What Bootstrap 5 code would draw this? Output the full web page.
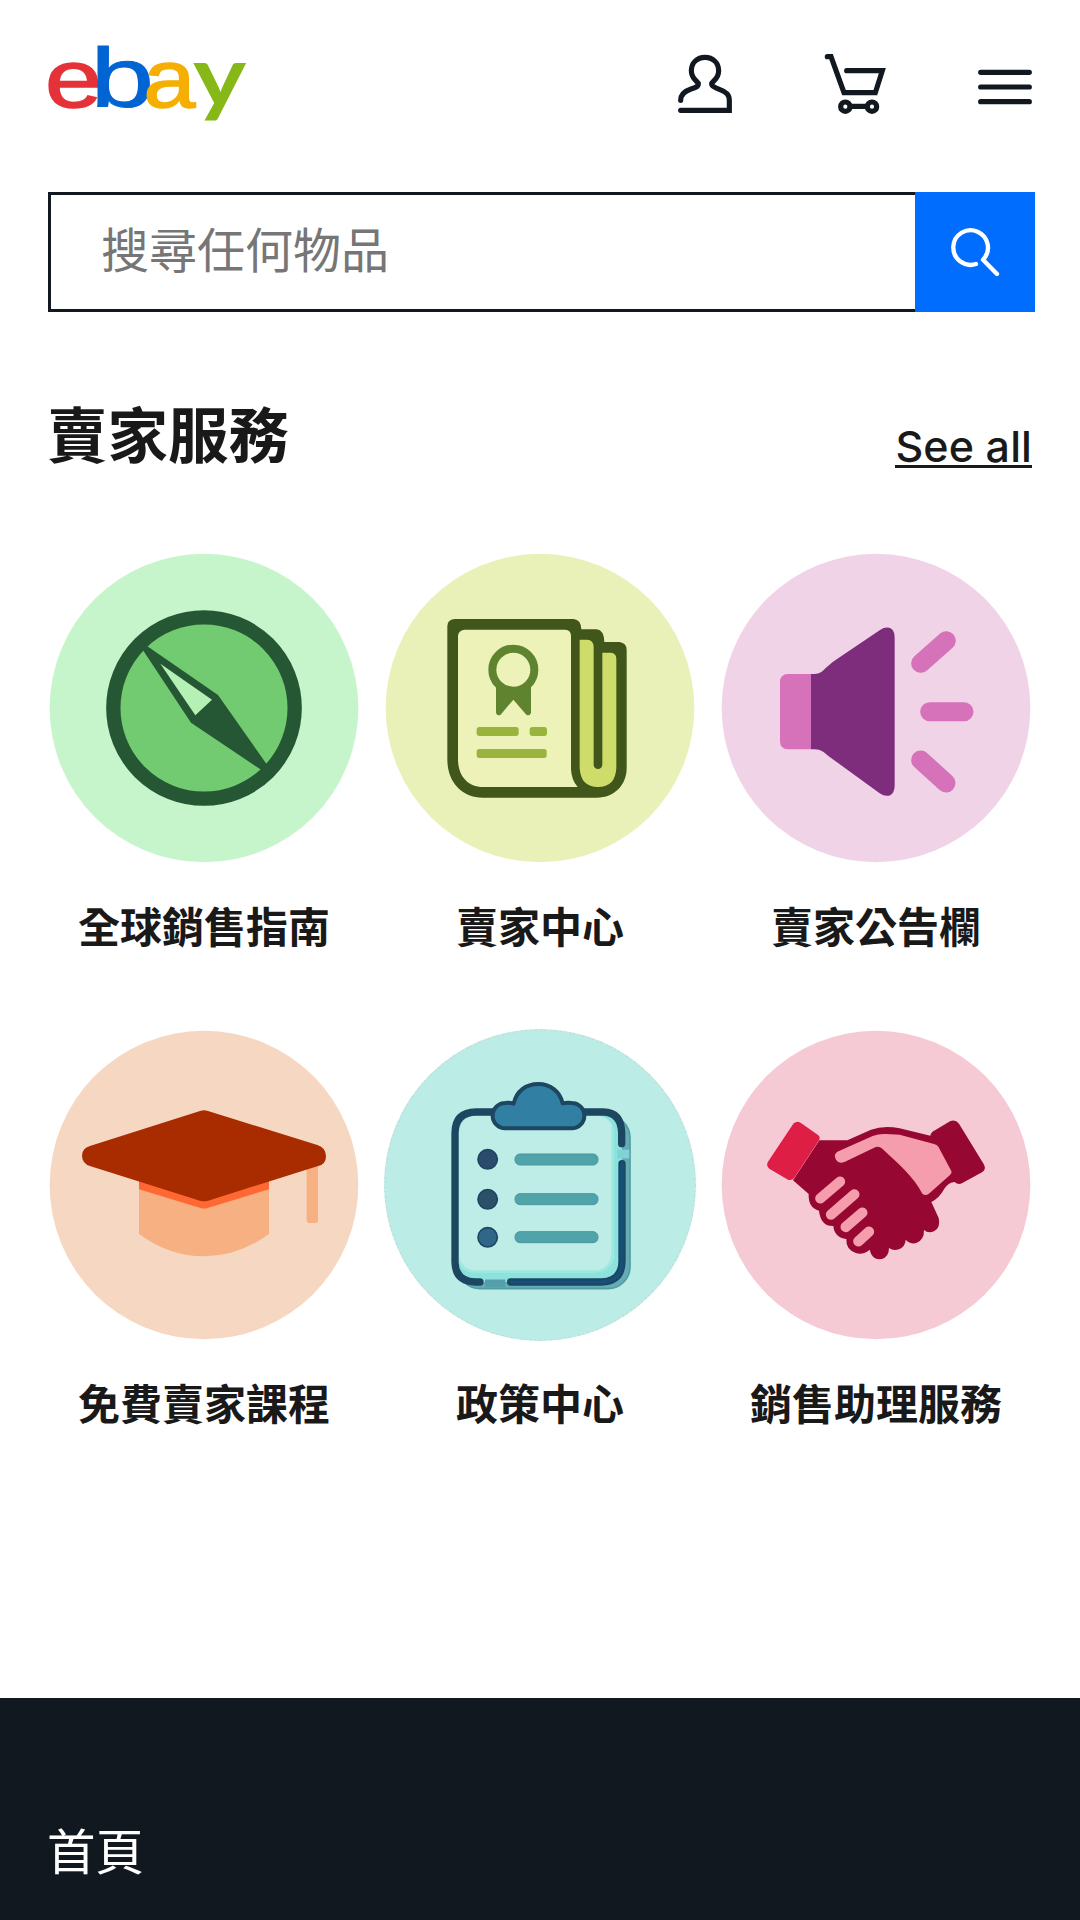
<!DOCTYPE html>
<html lang="zh-Hant">
<head>
<meta charset="utf-8">
<meta name="viewport" content="width=device-width, initial-scale=1">
<title>eBay 賣家服務</title>
<link href="https://cdn.jsdelivr.net/npm/bootstrap@5.3.0/dist/css/bootstrap.min.css" rel="stylesheet">
<style>
  body { font-family: "Noto Sans CJK TC", sans-serif; color: #191919; background: #fff; }
  svg { display: block; flex: none; }
  .top-bar { height: 192px; padding: 44px 47px 0 48px; }
  .logo-text { font-family: "Liberation Sans", sans-serif; font-size: 84px; }
  .logo-y { font-family: Lato, sans-serif; font-weight: 700; }
  .top-icons { gap: 88px; margin-top: 8px; }
  .stroke-icon { fill: none; stroke: #111820; stroke-width: 15.5; stroke-linecap: round; }
  .search-bar { width: 987px; height: 120px; margin-left: 48px; }
  .search-bar .form-control { height: 120px; border: 3px solid #111820; border-right: 0; border-radius: 0; padding: 0 0 10px 50px; font-size: 48px; color: #111820; box-shadow: none; }
  .search-bar .form-control::placeholder { color: #767676; opacity: 1; }
  .search-btn { width: 120px; height: 120px; background: #006dff; border: 0; border-radius: 0; }
  .section-head { height: 236px; padding: 76px 48px 0 47px; }
  .section-title { font-size: 60.5px; font-weight: 700; line-height: 88px; }
  .see-all { font-family: Inter, sans-serif; font-size: 43px; font-weight: 500; line-height: 50px; color: #191919; letter-spacing: .1px; margin-top: 33px; height: 47px; border-bottom: 3px solid #191919; }
  .services { padding: 0 36px; height: 1150px; }
  .service { height: 477px; color: #191919; }
  .service-name { font-size: 42px; font-weight: 700; line-height: 60px; margin-top: 27px; }
  .site-footer { height: 222px; background: #111820; padding: 116px 47px 0; }
  .site-footer a { font-size: 48.5px; line-height: 70px; color: #fff; }
</style>
<script defer src="https://cdn.jsdelivr.net/npm/bootstrap@5.3.0/dist/js/bootstrap.bundle.min.js"></script>
</head>
<body class="overflow-hidden">
<header class="top-bar d-flex justify-content-between align-items-start">
  <a href="#" class="text-decoration-none" aria-label="eBay">
    <svg class="logo-text" width="200" height="84" viewBox="48 44 200 84" overflow="visible">
      <text transform="translate(45 106.6) scale(1.22 .98)" fill="#e53238" stroke="#e53238" stroke-width="1.6">e</text>
      <text transform="translate(90.4 106.6) scale(1.36 .99)" fill="#0064d2" stroke="#0064d2">b</text>
      <text transform="translate(143.5 106.6) scale(1.11 .98)" fill="#f5af02" stroke="#f5af02" stroke-width="1.6">a</text>
      <text class="logo-y" transform="translate(193 106) scale(1.2 1)" fill="#86b817">y</text>
    </svg>
  </a>
  <nav class="top-icons d-flex" aria-label="主選單">
    <a href="#" aria-label="帳戶"><svg class="stroke-icon" width="60" height="64" viewBox="45 36 180 192">
      <path d="M62 181C62 160 78 152 93 147C106 143 115 140 115 131C115 124 94 119 94 92C94 68 112 52 135 52S176 68 176 92C176 119 155 124 155 131C155 139 168 144 180 149C199 156 208 163 208 182V211H62"/></svg></a>
    <a href="#" aria-label="購物車"><svg class="stroke-icon" width="65" height="64" viewBox="489 36 195 192">
      <path d="M502 50H513L552 158H646L667 92H560M572 199H620"/><circle cx="556" cy="200" r="14"/><circle cx="636" cy="200" r="14"/></svg></a>
    <a href="#" aria-label="選單"><svg class="stroke-icon" width="57" height="64" viewBox="948 36 171 192">
      <path d="M962 97H1108M962 141H1108M962 185H1108"/></svg></a>
  </nav>
</header>
<main>
  <form class="search-bar d-flex">
    <input class="form-control flex-grow-1" type="text" placeholder="搜尋任何物品" aria-label="搜尋任何物品">
    <button class="search-btn btn p-0 d-flex align-items-center justify-content-center" type="button" aria-label="搜尋">
      <svg width="120" height="120" viewBox="165 36 360 360" fill="none" stroke="#fff" stroke-width="13" stroke-linecap="round" stroke-linejoin="round"><path d="M348 252A52 52 0 1 1 369 239L411 282"/></svg>
    </button>
  </form>
  <div class="section-head d-flex justify-content-between align-items-start">
    <h2 class="section-title mb-0">賣家服務</h2>
    <a class="see-all text-decoration-none" href="#">See all</a>
  </div>
  <div class="services">
    <div class="row g-0 text-center">
      <a href="#" class="service col-4 d-flex flex-column align-items-center text-decoration-none">
        <svg width="320" height="320" viewBox="12 24 960 960">
          <circle cx="492" cy="504" r="463" fill="#c6f5cb"/>
          <circle cx="492" cy="504" r="272" fill="#73cb71" stroke="#265734" stroke-width="43"/>
          <path d="M311 334L293 299L321 318L534 465L681 674L690 706L661 688L453 548Z" fill="#265734"/>
          <path d="M361 371L516 479L466 526Z" fill="#b5f0b4"/>
        </svg>
        <span class="service-name">全球銷售指南</span>
      </a>
      <a href="#" class="service col-4 d-flex flex-column align-items-center text-decoration-none">
        <svg width="320" height="320" viewBox="12 24 960 960">
          <circle cx="492" cy="504" r="463" fill="#eaf1b8"/>
          <path d="M235 237H593Q615 239 616 268H662Q684 270 685 306H731Q752 309 752 330V684C752 735 715 773 663 773H321C255 773 214 724 214 658V258Q214 240 235 237Z" fill="#40561b"/>
          <path d="M265 269H568Q585 270 585 288V687Q586 719 605 741H321C275 741 246 707 246 658V288Q247 271 265 269Z" fill="#ecf2b8"/>
          <path d="M611 299H633Q653 300 653 321V674A13 13 0 0 0 679 674V338H704Q721 339 721 356V684Q718 741 666 741T611 684Z" fill="#cedc6a"/>
          <path d="M360 435H465V518Q461 530 451 524L412 479L374 524Q363 529 360 518Z" fill="#5f832f"/>
          <circle cx="412" cy="389" r="63" fill="#ecf2b8" stroke="#5f832f" stroke-width="24"/>
          <g fill="#98b43d"><rect x="302" y="561" width="126" height="27" rx="8"/><rect x="461" y="561" width="52" height="27" rx="8"/><rect x="302" y="627" width="210" height="27" rx="8"/></g>
        </svg>
        <span class="service-name">賣家中心</span>
      </a>
      <a href="#" class="service col-4 d-flex flex-column align-items-center text-decoration-none">
        <svg width="320" height="320" viewBox="12 24 960 960">
          <circle cx="492" cy="504" r="463" fill="#f1d3e8"/>
          <path d="M298 402H228Q204 403 204 426V603Q204 627 228 628H298Z" fill="#d672b9"/>
          <path d="M297 402C326 402 328 397 341 384Q361 365 384 351L504 270Q524 257 539 267Q548 275 548 294V738Q547 758 536 765Q521 772 503 760L348 647C328 631 327 628 297 628Z" fill="#7d2d7c"/>
          <path d="M626 370L703 302M653 515H756M626 660L702 729" fill="none" stroke="#d672b9" stroke-width="57" stroke-linecap="round"/>
        </svg>
        <span class="service-name">賣家公告欄</span>
      </a>
      <a href="#" class="service col-4 d-flex flex-column align-items-center text-decoration-none">
        <svg width="320" height="320" viewBox="12 14 960 960">
          <circle cx="492" cy="494" r="463" fill="#f6d7c1"/>
          <path d="M297 480H687V641Q595 708 492 708T297 641Z" fill="#f6b081"/>
          <path d="M297 470H687V507L505 562Q492 567 479 562L297 507Z" fill="#ff6833"/>
          <path d="M800 430H834V600Q834 608 826 608H808Q800 608 800 600Z" fill="#f6b081"/>
          <path d="M480 272Q492 268 504 272L832 374Q858 382 858 408T832 438L504 541Q492 545 480 541L152 438Q126 430 126 406T152 376Z" fill="#a92b00"/>
        </svg>
        <span class="service-name">免費賣家課程</span>
      </a>
      <a href="#" class="service col-4 d-flex flex-column align-items-center text-decoration-none">
        <svg width="320" height="320" viewBox="12 14 960 960">
          <circle cx="492" cy="494" r="468" fill="#bcece6"/>
          <circle cx="492" cy="494" r="465" fill="none" stroke="#cbd6d2" stroke-width="4" stroke-dasharray="5 13 3 8"/>
          <rect x="246" y="286" width="516" height="519" rx="66" fill="#62adb6" stroke="#559da5" stroke-width="5"/>
          <rect x="237" y="275" width="501" height="510" rx="60" fill="#8ce3de"/>
          <rect x="249" y="286" width="464" height="469" rx="50" fill="#beece6"/>
          <path d="M248 720Q262 754 300 754H655Q708 752 710 695V320" fill="none" stroke="#9de8df" stroke-width="8"/>
          <path d="M742 388V414" stroke="#80d3d5" stroke-width="36"/>
          <path d="M350 275H300Q237 276 237 339V725Q238 783 298 785H312M404 785H676Q737 783 738 724V430M737 370V337Q735 276 682 275H625" fill="none" stroke="#1d4661" stroke-width="22" stroke-linecap="round"/>
          <path d="M327 789H388" stroke="#559faa" stroke-width="23"/>
          <path d="M405 785H676Q737 783 738 724V430" fill="none" stroke="#164f78" stroke-width="10" stroke-linecap="round"/>
          <path d="M388 324A36 36 0 0 1 388 248Q400 246 413 250C421 212 450 191 487 191S552 215 560 249Q573 246 587 248A37 37 0 0 1 587 324Z" fill="#3180a4" stroke="#1d4661" stroke-width="12" stroke-linejoin="round"/>
          <g stroke="#1d4661" stroke-width="5"><circle cx="335" cy="417" r="29" fill="#2b4b6d"/><circle cx="335" cy="537" r="29" fill="#2c5069"/><circle cx="335" cy="651" r="29" fill="#306688"/></g>
          <g fill="#51a3aa" stroke="#4698a0" stroke-width="3"><rect x="417" y="401" width="249" height="33" rx="15"/><rect x="417" y="520" width="249" height="33" rx="15"/><rect x="417" y="634" width="249" height="33" rx="15"/></g>
        </svg>
        <span class="service-name">政策中心</span>
      </a>
      <a href="#" class="service col-4 d-flex flex-column align-items-center text-decoration-none">
        <svg width="320" height="320" viewBox="12 14 960 960">
          <circle cx="492" cy="494" r="463" fill="#f5cad5"/>
          <path d="M322 360H406L477 328Q516 314 563 324L655 346Q657 336 669 330L714 303Q730 296 741 310L815 431Q824 447 810 456L751 488Q739 495 728 485Q710 486 698 504Q681 535 658 545L680 593Q687 622 666 633Q648 640 636 629Q637 659 613 668Q596 673 581 658Q580 678 561 687Q544 693 531 683Q531 710 509 716Q480 720 473 688Q455 704 433 699Q401 688 403 656Q367 652 364 617Q326 618 321 571Q288 562 290 521L243 480Z" fill="#960832"/>
          <path d="M245 309Q257 300 268 309L318 344Q326 350 321 360L247 472Q240 481 228 478L172 445Q162 438 167 426Z" fill="#df1e45"/>
          <path d="M376 394L482 347Q500 340 522 341L563 343L666 371Q675 373 679 379L718 452Q721 459 714 464L654 517Q642 530 631 520C606 469 555 426 511 385Q499 374 485 383L399 424Q381 433 372 418Q363 403 376 394Z" fill="#f69dad"/>
          <path d="M325 534L384 484M357 583L427 522M401 620L451 577M439 663L471 634" fill="none" stroke="#f69dad" stroke-width="31" stroke-linecap="round"/>
        </svg>
        <span class="service-name">銷售助理服務</span>
      </a>
    </div>
  </div>
</main>
<footer class="site-footer">
  <a href="#" class="d-block text-decoration-none">首頁</a>
</footer>
</body>
</html>
